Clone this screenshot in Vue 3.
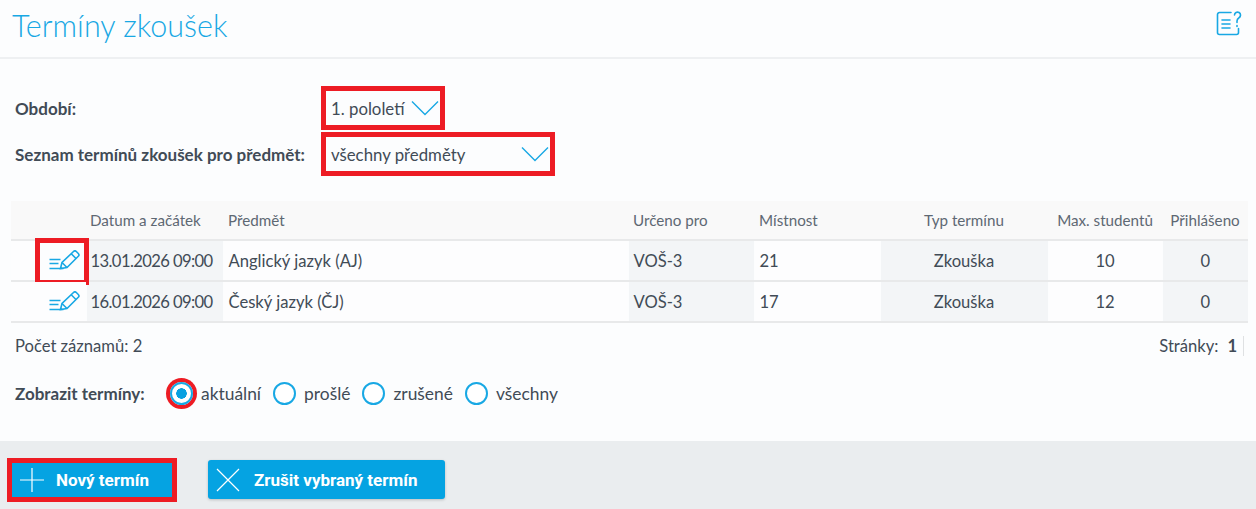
<script setup>
const rows = [
  { date: '13.01.2026 09:00', subject: 'Anglický jazyk (AJ)', group: 'VOŠ-3', room: '21', type: 'Zkouška', max: '10', signed: '0', marked: true },
  { date: '16.01.2026 09:00', subject: 'Český jazyk (ČJ)', group: 'VOŠ-3', room: '17', type: 'Zkouška', max: '12', signed: '0', marked: false },
]
const radios = [
  { label: 'aktuální', checked: true },
  { label: 'prošlé', checked: false },
  { label: 'zrušené', checked: false },
  { label: 'všechny', checked: false },
]
</script>

<template>
  <div class="page">
    <header class="head">
      <h1>Termíny zkoušek</h1>
      <svg class="help" width="26" height="26" viewBox="0 0 26 26" fill="none" stroke="#18a8e4" stroke-width="1.6" stroke-linecap="round">
        <path d="M15 1.500H3.500a2 2 0 0 0-2 2v18a2 2 0 0 0 2 2h17a2 2 0 0 0 2-2v-4" />
        <path d="M6 9h8M6 13h8M6 17h8" />
        <path d="M18.500 4a3 3 0 1 1 4.500 2.700c-1 .6-2 1.500-2 3.300v1.500M21 14.500v1" />
      </svg>
    </header>

    <section class="filters">
      <div class="filter">
        <label>Období:</label>
        <div class="select small"><span>1. pololetí</span><svg width="28" height="16" viewBox="0 0 28 16" fill="none" stroke="#18a8e4" stroke-width="1.4"><path d="M1 1.500l13 13 13-13" /></svg></div>
      </div>
      <div class="filter">
        <label>Seznam termínů zkoušek pro předmět:</label>
        <div class="select wide"><span>všechny předměty</span><svg width="28" height="16" viewBox="0 0 28 16" fill="none" stroke="#18a8e4" stroke-width="1.4"><path d="M1 1.500l13 13 13-13" /></svg></div>
      </div>
    </section>

    <table class="grid">
      <colgroup>
        <col style="width:75px"><col style="width:137px"><col style="width:405px"><col style="width:126px"><col style="width:126px"><col style="width:168px"><col style="width:114px"><col style="width:86px">
      </colgroup>
      <thead>
        <tr>
          <th></th><th class="date-h">Datum a začátek</th><th>Předmět</th><th>Určeno pro</th><th>Místnost</th>
          <th class="c">Typ termínu</th><th class="c">Max. studentů</th><th class="c">Přihlášeno</th>
        </tr>
      </thead>
      <tbody>
        <tr v-for="r in rows" :key="r.date">
          <td class="icon-cell">
            <span class="edit" :class="{ marked: r.marked }">
              <svg width="32" height="24" viewBox="0 0 32 24" fill="none" stroke="#18a8e4" stroke-width="1.600">
                <path d="M1.500 9.500h11M1.500 13.500h9M1.500 18.500h14" />
                <path d="M12.500 18.500L14 12.500L25.500 1.500a2 2 0 0 1 2.800 0l2 2a2 2 0 0 1 0 2.800L19 17.500z" />
                <path d="M14 12.500l5 5M23.200 3.700l5 5" />
              </svg>
            </span>
          </td>
          <td class="s date">{{ r.date }}</td>
          <td>{{ r.subject }}</td>
          <td class="s">{{ r.group }}</td>
          <td>{{ r.room }}</td>
          <td class="s c">{{ r.type }}</td>
          <td class="c">{{ r.max }}</td>
          <td class="s c">{{ r.signed }}</td>
        </tr>
      </tbody>
    </table>

    <div class="meta">
      <span>Počet záznamů: 2</span>
      <span class="pages">Stránky:<b>1</b></span>
    </div>

    <div class="radios">
      <label class="radio-title">Zobrazit termíny:</label>
      <div v-for="o in radios" :key="o.label" class="radio">
        <span class="dot" :class="{ on: o.checked }"></span>
        <span>{{ o.label }}</span>
      </div>
    </div>

    <footer class="foot">
      <button class="btn first">
        <svg width="26" height="26" viewBox="0 0 26 26" stroke="#fff" stroke-width="1.2"><path d="M13 1v24M1 13h24" /></svg>
        <span>Nový termín</span>
      </button>
      <button class="btn second">
        <svg width="24" height="24" viewBox="0 0 24 24" stroke="#fff" stroke-width="1.2"><path d="M1 1l22 22M23 1L1 23" /></svg>
        <span>Zrušit vybraný termín</span>
      </button>
    </footer>
  </div>
</template>

<style>
html, body { margin: 0; background: #fcfdfe; }
</style>

<style scoped>
.page {
  width: 1256px;
  height: 509px;
  overflow: hidden;
  display: flex;
  flex-direction: column;
  background: #fcfdfe;
  color: #414b56;
  font-family: Lato, "Noto Sans", sans-serif;
  font-size: 16.600px;
}
.head {
  height: 57px;
  flex: none;
  border-bottom: 2px solid #eef0f2;
  display: flex;
  justify-content: space-between;
  padding: 0 14px 0 12px;
}
h1 {
  margin: 6px 0 0;
  font-weight: 300;
  font-size: 30.500px;
  line-height: 38px;
  color: #18a8e4;
}
.help { margin: 11px 0 0; }
.filters { margin-top: 27px; height: 115px; flex: none; display: flex; flex-direction: column; gap: 2px; padding-left: 15px; }
.filter { display: flex; align-items: center; height: 44px; flex: none; }
.filter label { width: 306px; font-weight: 700; flex: none; font-size: 17px; }
.select {
  border: 5px solid #ed1c24;
  box-sizing: border-box;
  height: 44px;
  display: flex;
  align-items: center;
  justify-content: space-between;
  padding: 0 1px 0 5px;
  font-size: 16.800px;
}
.select.small { width: 124px; }
.select.wide { width: 234px; }
.grid {
  margin-left: 11px;
  width: 1237px;
  table-layout: fixed;
  border-collapse: collapse;
  flex: none;
}
th { height: 38px; padding: 0 5px; background: #f9f9f9; font-weight: 400; font-size: 15.200px; text-align: left; color: #5e6873; border-bottom: 2px solid #e8e9ea; }
td { height: 39px; padding: 0 5px; border-bottom: 2px solid #e8e9ea; border-left: 1px solid #fcfdfe; background: #fdfdfe; }
td.s { background: #f3f5f7; }
td:first-child { border-left: 0; }
.c { text-align: center; }
th.date-h { padding-left: 4px; }
td.date { padding-left: 4px; letter-spacing: -.6px; white-space: nowrap; }
.icon-cell { padding: 0; position: relative; }
.edit { display: flex; align-items: center; justify-content: center; position: absolute; left: 24px; top: -3px; width: 54px; height: 47px; box-sizing: border-box; }
.edit svg { margin-left: 3px; }
.edit.marked { border: 5px solid #ed1c24; background: #fcfdfe; }
.meta { display: flex; justify-content: space-between; padding: 0 12px 0 15px; margin-top: 12px; height: 22px; align-items: center; flex: none; }
.pages { border-right: 1px solid #dfe1e3; padding-right: 6px; display: flex; gap: 9px; }
.radios { display: flex; align-items: center; padding-left: 15px; margin-top: 21px; height: 30px; flex: none; font-size: 17.400px; }
.radio-title { font-weight: 700; width: 155px; font-size: 17px; }
.radio { display: flex; align-items: center; gap: 8px; margin-right: 12px; }
.dot { width: 23px; height: 23px; border: 2px solid #18a8e4; border-radius: 50%; box-sizing: border-box; background: #fff; display: block; }
.dot.on { box-shadow: 0 0 0 4px #ed1c24; background: radial-gradient(circle, #08a0e0 0 5px, #fff 5.500px); }
.foot { margin-top: 33px; flex: 1; background: #eaedef; display: flex; align-items: flex-start; padding: 17px 0 0 7px; gap: 31px; }
.btn {
  height: 39px;
  margin-top: 2px;
  border: 0;
  background: #05a3e2;
  color: #fff;
  font: 700 17px Roboto, sans-serif;
  display: flex;
  align-items: center;
  border-radius: 3px;
  box-shadow: 0 1px 3px rgba(0,0,0,.2);
  padding: 0;
}
.btn.first { margin-top: 0; width: 170px; height: 44px; border: 5px solid #ed1c24; border-radius: 0; box-shadow: none; box-sizing: border-box; padding-left: 7px; gap: 11px; }
.btn.second { width: 237px; padding-left: 8px; gap: 14px; }
</style>
